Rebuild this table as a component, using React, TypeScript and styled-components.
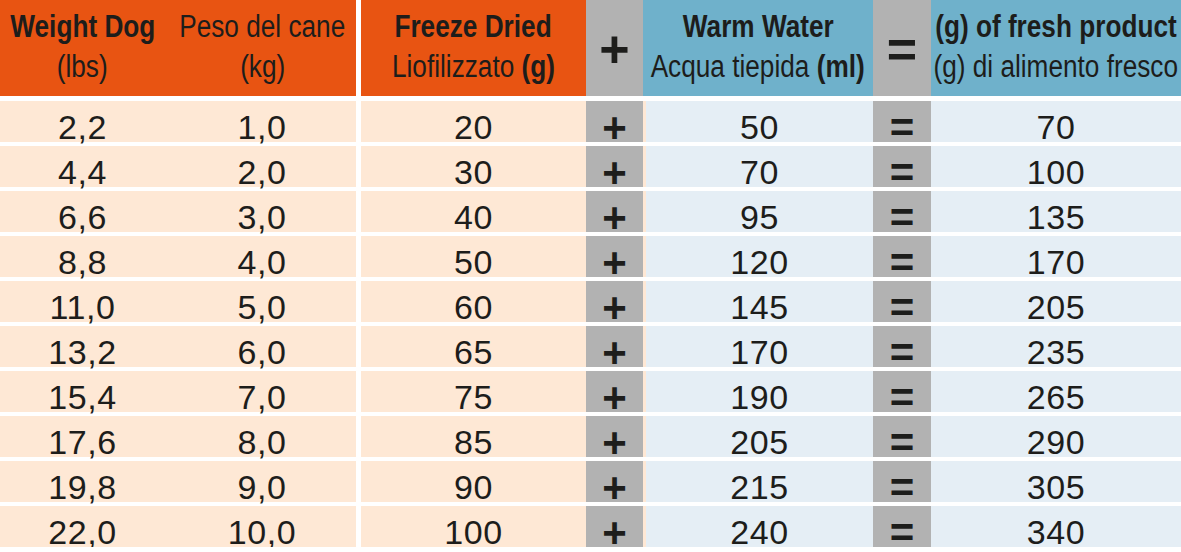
import React from "react";
import styled, { createGlobalStyle, css } from "styled-components";

const Global = createGlobalStyle`
  html, body { margin: 0; padding: 0; background: #ffffff; }
  body { font-family: "Liberation Sans", Arial, sans-serif; color: #1d1d1b; }
`;

const COLS = "165px 191px 230px 57px 230px 58px 250px";

type Tone = "orange" | "peach" | "grey" | "blueHead" | "blue";

const toneBg: Record<Tone, string> = {
  orange: "#e85412",
  peach: "#fee8d5",
  grey: "#b2b2b2",
  blueHead: "#6fb1cb",
  blue: "#e5eef5",
};

const Table = styled.div`
  width: 1181px;
  display: flex;
  flex-direction: column;
  background: #ffffff;
`;

const HeaderRow = styled.div`
  display: grid;
  grid-template-columns: ${COLS};
  height: 96px;
`;

const Body = styled.div`
  display: flex;
  flex-direction: column;
  gap: 4px;
  margin-top: 5px;
`;

const Row = styled.div`
  display: grid;
  grid-template-columns: ${COLS};
  height: 41px;
`;

const HeadCell = styled.div<{ $tone: Tone; $split?: boolean; $shift?: number }>`
  background: ${(p) => toneBg[p.$tone]};
  ${(p) =>
    p.$split &&
    css`
      border-left: 5px solid #ffffff;
    `}
  box-sizing: border-box;
  display: flex;
  flex-direction: column;
  align-items: center;
  justify-content: center;
  padding-bottom: 3px;
  padding-left: ${(p) => p.$shift ?? 0}px;
  font-family: "Liberation Sans", Arial, sans-serif;
  font-size: 31px;
  line-height: 40px;
  white-space: nowrap;
  color: #1d1d1b;
  min-width: 0;
`;

const HeadLine = styled.span<{ $bold?: boolean }>`
  display: block;
  font-weight: ${(p) => (p.$bold ? 700 : 400)};
  transform: scaleX(0.845);
  transform-origin: center;
`;

const B = styled.b`
  font-weight: 700;
`;

const HeadOp = styled.div`
  background: ${toneBg.grey};
  display: flex;
  align-items: center;
  justify-content: center;
  font-family: "Liberation Sans", Arial, sans-serif;
  font-weight: 700;
  font-size: 52px;
  line-height: 52px;
  padding-top: 2px;
  box-sizing: border-box;
  color: #1d1d1b;
`;

const Cell = styled.div<{ $tone: Tone; $split?: boolean; $edge?: boolean; $shift?: number }>`
  background: ${(p) => toneBg[p.$tone]};
  box-sizing: border-box;
  ${(p) =>
    p.$split &&
    css`
      border-left: 5px solid #ffffff;
    `}
  ${(p) =>
    p.$edge &&
    css`
      border-left: 3px solid ${toneBg.peach};
    `}
  display: flex;
  justify-content: center;
  align-items: flex-start;
  padding-top: 11px;
  padding-left: ${(p) => p.$shift ?? 0}px;
  font-family: "Liberation Sans", Arial, sans-serif;
  font-size: 34px;
  letter-spacing: 0.6px;
  line-height: 30px;
  color: #1d1d1b;
  white-space: nowrap;
`;

const Op = styled.div`
  background: ${toneBg.grey};
  display: flex;
  justify-content: center;
  align-items: flex-start;
  padding-top: 13px;
  box-sizing: border-box;
  font-family: "Liberation Sans", Arial, sans-serif;
  font-weight: 700;
  font-size: 42px;
  line-height: 28px;
  color: #1d1d1b;
`;

const rows = [
  ["2,2", "1,0", "20", "50", "70"],
  ["4,4", "2,0", "30", "70", "100"],
  ["6,6", "3,0", "40", "95", "135"],
  ["8,8", "4,0", "50", "120", "170"],
  ["11,0", "5,0", "60", "145", "205"],
  ["13,2", "6,0", "65", "170", "235"],
  ["15,4", "7,0", "75", "190", "265"],
  ["17,6", "8,0", "85", "205", "290"],
  ["19,8", "9,0", "90", "215", "305"],
  ["22,0", "10,0", "100", "240", "340"],
];

export default function App() {
  return (
    <>
      <Global />
      <Table>
        <HeaderRow>
          <HeadCell $tone="orange">
            <HeadLine $bold>Weight Dog</HeadLine>
            <HeadLine>(lbs)</HeadLine>
          </HeadCell>
          <HeadCell $tone="orange" $shift={4}>
            <HeadLine>Peso del cane</HeadLine>
            <HeadLine>(kg)</HeadLine>
          </HeadCell>
          <HeadCell $tone="orange" $split>
            <HeadLine $bold>Freeze Dried</HeadLine>
            <HeadLine>
              Liofilizzato <B>(g)</B>
            </HeadLine>
          </HeadCell>
          <HeadOp>+</HeadOp>
          <HeadCell $tone="blueHead">
            <HeadLine $bold>Warm Water</HeadLine>
            <HeadLine>
              Acqua tiepida <B>(ml)</B>
            </HeadLine>
          </HeadCell>
          <HeadOp>=</HeadOp>
          <HeadCell $tone="blueHead">
            <HeadLine $bold>(g) of fresh product</HeadLine>
            <HeadLine>(g) di alimento fresco</HeadLine>
          </HeadCell>
        </HeaderRow>
        <Body>
          {rows.map((r, i) => (
            <Row key={i}>
              <Cell $tone="peach">{r[0]}</Cell>
              <Cell $tone="peach" $shift={3}>{r[1]}</Cell>
              <Cell $tone="peach" $split>{r[2]}</Cell>
              <Op>+</Op>
              <Cell $tone="blue" $edge>{r[3]}</Cell>
              <Op>=</Op>
              <Cell $tone="blue">{r[4]}</Cell>
            </Row>
          ))}
        </Body>
      </Table>
    </>
  );
}
